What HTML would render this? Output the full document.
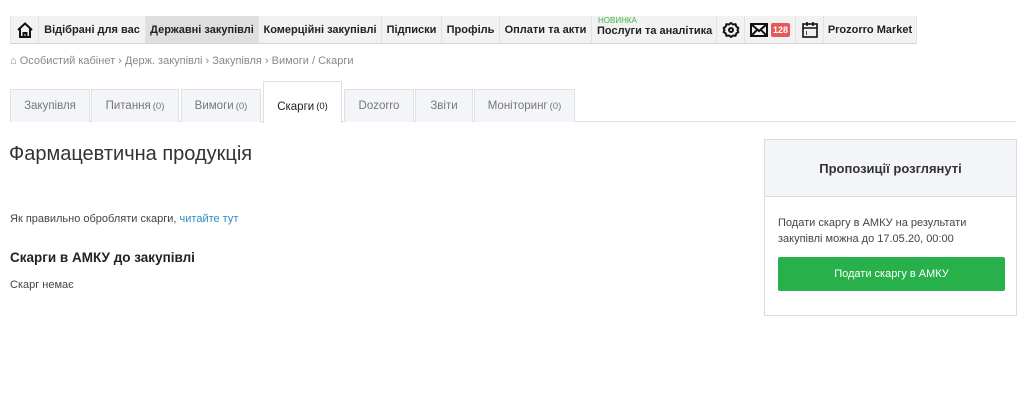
<!DOCTYPE html>
<html><head><meta charset="utf-8"><style>
*{box-sizing:border-box;margin:0;padding:0}
body{width:1024px;height:408px;background:#fff;font-family:"Liberation Sans",Arial,sans-serif;position:relative;overflow:hidden;color:#333}
.a{position:absolute}
.nav{position:absolute;top:16px;height:28px;background:#f2f2f2;border-right:1px solid #e2e2e2;border-bottom:1px solid #d4d4d4;font-size:11px;font-weight:bold;color:#222;display:flex;align-items:center;justify-content:center;white-space:nowrap;overflow:hidden}
.tab{position:absolute;top:89px;height:33px;background:#f3f5f8;border:1px solid #dde1e6;border-bottom:none;font-size:11.5px;color:#777;display:flex;align-items:center;justify-content:center}
.tab small{font-size:9.5px;margin-left:2px}
</style></head><body>
<div class="nav" style="left:10px;width:29px;border-left:1px solid #e2e2e2">
<svg width="18" height="18" viewBox="0 0 18 18" fill="none" stroke="#111" stroke-width="2"><path d="M2 9L9 2.5 16 9"/><path d="M4 8v8h10V8"/><path d="M7.5 16v-4h3v4"/></svg></div>
<div class="nav" style="left:39px;width:107px">Відібрані для вас</div>
<div class="nav" style="left:146px;width:113px;background:#dedede">Державні закупівлі</div>
<div class="nav" style="left:259px;width:123px">Комерційні закупівлі</div>
<div class="nav" style="left:382px;width:60px">Підписки</div>
<div class="nav" style="left:442px;width:58px">Профіль</div>
<div class="nav" style="left:500px;width:92px">Оплати та акти</div>
<div class="nav" style="left:592px;width:125px;justify-content:flex-start;padding-left:5px"><span style="position:absolute;top:0;left:6px;font-size:8px;font-weight:normal;color:#3cb84a">НОВИНКА</span><span style="margin-top:2px">Послуги та аналітика</span></div>
<div class="nav" style="left:717px;width:28px">
<svg width="18" height="18" viewBox="0 0 18 18" fill="none" stroke="#111" stroke-width="2"><circle cx="9" cy="9" r="2"/><path d="M9 2l2 1.5 2.5-.3.8 2.3 2 1.5-.8 2 .8 2-2 1.5-.8 2.3-2.5-.3L9 16l-2-1.5-2.5.3-.8-2.3-2-1.5.8-2-.8-2 2-1.5.8-2.3 2.5.3z"/></svg></div>
<div class="nav" style="left:745px;width:51px">
<svg width="18" height="14" viewBox="0 0 18 14" fill="none" stroke="#111" stroke-width="2"><rect x="1" y="1" width="16" height="12"/><path d="M1 1l8 7 8-7M1 13l6-6M17 13l-6-6"/></svg>
<span style="background:#e8575a;color:#fff;font-size:9px;padding:2px 2px;border-radius:2px;margin-left:3px">128</span></div>
<div class="nav" style="left:796px;width:28px">
<svg width="18" height="18" viewBox="0 0 18 18" fill="none" stroke="#111" stroke-width="1.6"><rect x="2" y="3" width="14" height="13"/><path d="M2 7h14M6 1v4M12 1v4M5 11h1M5 13h1"/></svg></div>
<div class="nav" style="left:824px;width:93px">Prozorro Market</div>

<div class="a" style="left:10px;top:55px;font-size:11px;color:#888">⌂ Особистий кабінет › Держ. закупівлі › Закупівля › Вимоги / Скарги</div>

<div class="a" style="left:10px;top:121px;width:1006px;height:1px;background:#dde1e6"></div>
<div class="tab" style="left:10px;width:80px">Закупівля</div>
<div class="tab" style="left:91px;width:88px">Питання<small>(0)</small></div>
<div class="tab" style="left:181px;width:80px">Вимоги<small>(0)</small></div>
<div class="tab" style="left:263px;width:79px;top:81px;height:42px;background:#fff;color:#222;padding-top:8px">Скарги<small>(0)</small></div>
<div class="tab" style="left:344px;width:70px">Dozorro</div>
<div class="tab" style="left:415px;width:58px">Звіти</div>
<div class="tab" style="left:474px;width:101px">Моніторинг<small>(0)</small></div>

<div class="a" style="left:9px;top:143px;font-size:20px;color:#333">Фармацевтична продукція</div>
<div class="a" style="left:10px;top:213px;font-size:11px;color:#444">Як правильно обробляти скарги, <span style="color:#2a8fc4">читайте тут</span></div>
<div class="a" style="left:10px;top:250px;font-size:13.5px;font-weight:bold;color:#222">Скарги в АМКУ до закупівлі</div>
<div class="a" style="left:10px;top:279px;font-size:11px;color:#444">Скарг немає</div>

<div class="a" style="left:764px;top:139px;width:253px;height:177px;border:1px solid #dcdcdc">
<div style="height:57px;background:#f3f5f8;border-bottom:1px solid #dcdcdc;display:flex;align-items:center;justify-content:center;font-size:13px;font-weight:bold;color:#333">Пропозиції розглянуті</div>
<div style="padding:18px 13px 0;font-size:11px;line-height:16px;color:#444">Подати скаргу в АМКУ на результати закупівлі можна до 17.05.20, 00:00</div>
<div style="margin:10px 11px 0 13px;height:34px;background:#28b04b;border-radius:2px;color:#fff;font-size:11px;display:flex;align-items:center;justify-content:center">Подати скаргу в АМКУ</div>
</div>
</body></html>
